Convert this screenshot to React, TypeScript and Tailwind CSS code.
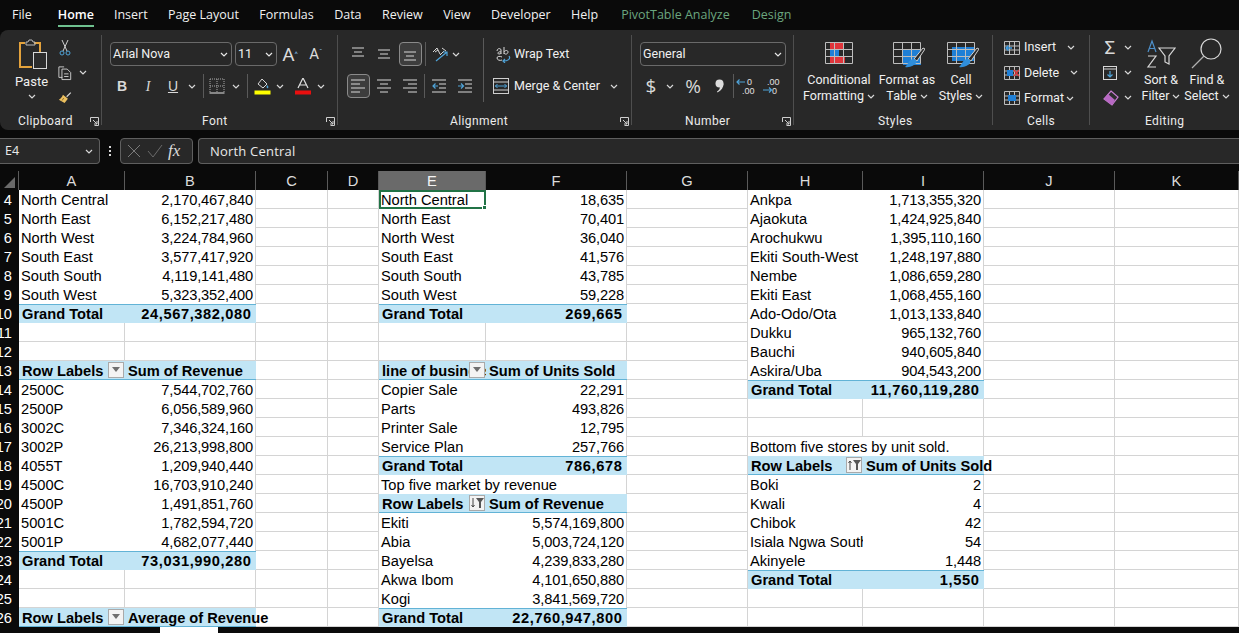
import type { ReactNode } from "react";

const tabs = ["Insert", "Page Layout", "Formulas", "Data", "Review", "View", "Developer", "Help"];
const colWidths = [106, 131, 72, 51, 107, 141, 121, 115, 121, 131, 124];
const letters = "ABCDEFGHIJK".split("");
const rowNums = Array.from({ length: 23 }, (_, i) => i + 4);

type Kind = "text" | "num" | "head" | "head2" | "total" | "total2";
type Btn = "drop" | "down" | "up";
interface Cell { t: string; k: Kind; btn?: Btn }

const cells: Record<string, Cell> = {};

function pivot(a: string, b: string, start: number, rows: [string, string][], total?: string) {
  rows.forEach((r, i) => {
    cells[a + (start + i)] = { t: r[0], k: "text" };
    cells[b + (start + i)] = { t: r[1], k: "num" };
  });
  if (total) {
    cells[a + (start + rows.length)] = { t: "Grand Total", k: "total" };
    cells[b + (start + rows.length)] = { t: total, k: "total2" };
  }
}

function head(a: string, b: string, row: number, left: string, right: string, btn: Btn) {
  cells[a + row] = { t: left, k: "head", btn };
  cells[b + row] = { t: right, k: "head2" };
}

pivot("A", "B", 4, [
  ["North Central", "2,170,467,840"], ["North East", "6,152,217,480"], ["North West", "3,224,784,960"],
  ["South East", "3,577,417,920"], ["South South", "4,119,141,480"], ["South West", "5,323,352,400"],
], "24,567,382,080");
head("A", "B", 13, "Row Labels", "Sum of Revenue", "drop");
pivot("A", "B", 14, [
  ["2500C", "7,544,702,760"], ["2500P", "6,056,589,960"], ["3002C", "7,346,324,160"],
  ["3002P", "26,213,998,800"], ["4055T", "1,209,940,440"], ["4500C", "16,703,910,240"],
  ["4500P", "1,491,851,760"], ["5001C", "1,782,594,720"], ["5001P", "4,682,077,440"],
], "73,031,990,280");
head("A", "B", 26, "Row Labels", "Average of Revenue", "drop");

pivot("E", "F", 4, [
  ["North Central", "18,635"], ["North East", "70,401"], ["North West", "36,040"],
  ["South East", "41,576"], ["South South", "43,785"], ["South West", "59,228"],
], "269,665");
head("E", "F", 13, "line of business", "Sum of Units Sold", "drop");
pivot("E", "F", 14, [
  ["Copier Sale", "22,291"], ["Parts", "493,826"], ["Printer Sale", "12,795"], ["Service Plan", "257,766"],
], "786,678");
pivot("E", "F", 19, [["Top five market by revenue", ""]]);
head("E", "F", 20, "Row Labels", "Sum of Revenue", "down");
pivot("E", "F", 21, [
  ["Ekiti", "5,574,169,800"], ["Abia", "5,003,724,120"], ["Bayelsa", "4,239,833,280"],
  ["Akwa Ibom", "4,101,650,880"], ["Kogi", "3,841,569,720"],
], "22,760,947,800");

pivot("H", "I", 4, [
  ["Ankpa", "1,713,355,320"], ["Ajaokuta", "1,424,925,840"], ["Arochukwu", "1,395,110,160"],
  ["Ekiti South-West", "1,248,197,880"], ["Nembe", "1,086,659,280"], ["Ekiti East", "1,068,455,160"],
  ["Ado-Odo/Ota", "1,013,133,840"], ["Dukku", "965,132,760"], ["Bauchi", "940,605,840"], ["Askira/Uba", "904,543,200"],
], "11,760,119,280");
pivot("H", "I", 17, [["Bottom five stores by unit sold.", ""]]);
head("H", "I", 18, "Row Labels", "Sum of Units Sold", "up");
pivot("H", "I", 19, [
  ["Boki", "2"], ["Kwali", "4"], ["Chibok", "42"], ["Isiala Ngwa South", "54"], ["Akinyele", "1,448"],
], "1,550");
// this one is cut off by its cell in the sheet, the two notes above run over
const clipped = new Set(["H22"]);

const kindClass: Record<Kind, string> = {
  text: "pl-[2px] leading-[20px]",
  num: "pr-[2px] text-right tracking-[-0.15px] leading-[20px] border-r border-[#d4d4d4]",
  head: "pl-[3px] font-bold leading-[20px] bg-[#c1e5f5] border-b border-[#62b3d6]",
  head2: "pl-[3px] font-bold leading-[20px] bg-[#c1e5f5] border-b border-[#62b3d6]",
  total: "pl-[3px] font-bold leading-[18px] bg-[#c1e5f5] border-t border-[#62b3d6]",
  total2: "pr-[4.5px] text-right font-bold tracking-[0.6px] leading-[18px] bg-[#c1e5f5] border-t border-[#62b3d6]",
};

function Chev({ className = "text-[#d8d8d8]" }: { className?: string }) {
  return (
    <svg width="8" height="5" viewBox="0 0 8 5" className={className}>
      <path d="M1 1l3 3 3-3" fill="none" stroke="currentColor" strokeWidth="1.2" />
    </svg>
  );
}

function Slot({ w, children }: { w: string; children?: ReactNode }) {
  return <div className={`${w} shrink-0 flex items-center justify-center`}>{children}</div>;
}

function Sep({ tall }: { tall?: boolean }) {
  return <div className={`w-px shrink-0 bg-[#5a5a5a] ${tall ? "h-[32px]" : "h-[24px]"}`} />;
}

function Launcher() {
  return (
    <svg width="9" height="9" viewBox="0 0 9 9" className="text-[#cfcfcf]">
      <path d="M.5 5V.5H8.5V8.5H4.5M3 3l4 4M4 7h3V4" fill="none" stroke="currentColor" />
    </svg>
  );
}

function Group({ w, label, pad, launcher, children }: { w: string; label: string; pad: string; launcher?: boolean; children: ReactNode }) {
  return (
    <section className={`${w} shrink-0 h-[90px] border-r border-[#4e4e4e] flex flex-col`}>
      <div className="h-[76px] shrink-0 flex flex-col">{children}</div>
      <div className={`${pad} mt-[3px] h-[14px] shrink-0 leading-[14px] text-[12px] tracking-[0.4px] text-[#ececec] flex items-center justify-between pr-[2px]`}>
        <span>{label}</span>
        {launcher && <Launcher />}
      </div>
    </section>
  );
}

function Select({ w, text }: { w: string; text: string }) {
  return (
    <div className={`${w} h-[24px] shrink-0 rounded-[4px] border border-[#6a6a6a] flex items-center justify-between pl-[2px] pr-[3px] text-[12.5px] text-[#f0f0f0]`}>
      <span>{text}</span>
      <Chev className="text-[#e8e8e8]" />
    </div>
  );
}

function AlignIcon({ mode }: { mode: "top" | "mid" | "bot" | "left" | "center" | "right" }) {
  const lines: Record<string, string> = {
    top: "M3 2h12M5 6h8M3 10h12",
    mid: "M3 4h12M5 8h8M3 12h12",
    bot: "M3 6h12M5 10h8M3 14h12",
    left: "M2 2h14M2 6h9M2 10h14M2 14h9",
    center: "M2 2h14M5 6h8M2 10h14M5 14h8",
    right: "M2 2h14M7 6h9M2 10h14M7 14h9",
  };
  return (
    <svg width="18" height="16" viewBox="0 0 18 16" className="text-[#d8d8d8]">
      <path d={lines[mode]} fill="none" stroke="currentColor" />
    </svg>
  );
}

function Selected({ children }: { children: ReactNode }) {
  return (
    <div className="w-[23px] h-[24px] rounded-[4px] border border-[#8a8a8a] bg-[#3d3d3d] flex items-center justify-center">
      {children}
    </div>
  );
}

function IndentIcon({ right }: { right?: boolean }) {
  return (
    <svg width="16" height="14" viewBox="0 0 16 14">
      <path d="M1 1h14M8 5h7M8 9h7M1 13h14" stroke="#d8d8d8" fill="none" />
      <path d={right ? "M1 7h5M4 4.5L6.5 7 4 9.5" : "M7 7H2M4.5 4.5L2 7l2.5 2.5"} stroke="#4fa3d8" strokeWidth="1.2" fill="none" />
    </svg>
  );
}

function PasteIcon() {
  return (
    <svg width="32" height="32" viewBox="0 0 32 32" fill="none">
      <path d="M9 5H4v24h12" stroke="#e3a23c" strokeWidth="2" />
      <path d="M18 5h6v9" stroke="#e3a23c" strokeWidth="2" />
      <path d="M10 7V4h2l1-2h3l1 2h2v3z" stroke="#b9b9b9" />
      <rect x="17.5" y="14.5" width="13" height="16" stroke="#d8d8d8" fill="#2c2c2c" />
    </svg>
  );
}

function CutIcon() {
  return (
    <svg width="12" height="17" viewBox="0 0 12 17" fill="none">
      <path d="M3 1l5 11M9 1L4 12" stroke="#cfcfcf" />
      <circle cx="3" cy="14" r="2" stroke="#4fa3d8" />
      <circle cx="9" cy="14" r="2" stroke="#4fa3d8" />
    </svg>
  );
}

function CopyIcon() {
  return (
    <svg width="16" height="16" viewBox="0 0 16 16" fill="none" stroke="#d8d8d8">
      <path d="M5 13H1V1h6" />
      <path d="M4.5 3.5h6l4 4v8h-10z" />
      <path d="M7 9h5M7 12h5" />
    </svg>
  );
}

function BrushIcon() {
  return (
    <svg width="17" height="16" viewBox="0 0 17 16" fill="none">
      <path d="M10 6l5-5 1 1-5 5z" fill="#d8d8d8" />
      <path d="M6 4l6 5-4 5-7-4c2-1 4-3 5-6z" fill="#ecc05f" />
      <path d="M5 11l2-3" stroke="#7a5c1e" />
    </svg>
  );
}

function BorderIcon() {
  return (
    <svg width="16" height="16" viewBox="0 0 16 16" fill="none">
      <path d="M1 1h14M1 8h14M8 1v14M1 1v14M15 1v14" stroke="#a8a8a8" strokeDasharray="1 1" />
      <path d="M.5 15h15" stroke="#e4e4e4" />
    </svg>
  );
}

function FillIcon() {
  return (
    <svg width="17" height="17" viewBox="0 0 17 17" fill="none">
      <path d="M8 1l5 5-4 4-5-4z" stroke="#d8d8d8" />
      <path d="M13 7c1 1 2 2 1 3s-2-1-1-3z" fill="#4fa3d8" />
      <rect x="0.5" y="12.5" width="16" height="4" fill="#ffff00" />
    </svg>
  );
}

function FontColorIcon() {
  return (
    <svg width="16" height="17" viewBox="0 0 16 17" fill="none">
      <path d="M3 10L8 0l5 10M5 7h6" stroke="#e0e0e0" strokeWidth="1.2" />
      <rect x="0" y="12.5" width="16" height="4" fill="#ea0f0f" />
    </svg>
  );
}

function OrientIcon() {
  return (
    <svg width="17" height="17" viewBox="0 0 17 17" fill="none">
      <path d="M1 6l4-4 3 6M3 6l3-2M8 9l4-4M10 2l4 3" stroke="#d8d8d8" />
      <path d="M4 15L15 6M11 6h4v4" stroke="#4fa3d8" strokeWidth="1.2" />
    </svg>
  );
}

function WrapIcon() {
  return (
    <svg width="15" height="17" viewBox="0 0 15 17" fill="none">
      <path d="M1 5c0-3 4-3 4-1v4M5 6C2 5 1 8 3 8s2-1 2-1M8 1v7M8 6c1-2 4-2 4 0s-3 3-4 1" stroke="#d8d8d8" />
      <path d="M6 14c-2 1-5 0-5-2s3-2 5-1" stroke="#d8d8d8" />
      <path d="M13 10c2 3-1 5-6 5M9 13l-2 2 2 2" stroke="#4fa3d8" strokeWidth="1.2" />
    </svg>
  );
}

function MergeIcon() {
  return (
    <svg width="16" height="16" viewBox="0 0 16 16" fill="none">
      <rect x="0.5" y="0.5" width="15" height="15" stroke="#cfcfcf" />
      <path d="M1 4h14M1 12h14" stroke="#cfcfcf" />
      <path d="M2 8h12M4.5 6L2.5 8l2 2M11.5 6l2 2-2 2" stroke="#4fa3d8" />
    </svg>
  );
}

function DecimalIcon({ more }: { more?: boolean }) {
  return (
    <svg width="20" height="18" viewBox="0 0 20 18" fill="none">
      <text x={more ? 6 : 11} y="8" fontSize="9" fill="#e0e0e0" fontFamily="Liberation Sans">{more ? ".00" : "0"}</text>
      <text x={more ? 11 : 6} y="17" fontSize="9" fill="#e0e0e0" fontFamily="Liberation Sans">{more ? "0" : ".00"}</text>
      <path d={more ? "M2 13h8M8 10.5l2.5 2.5L8 15.5" : "M9 5H1M3.5 2.5L1 5l2.5 2.5"} stroke="#4fa3d8" strokeWidth="1.2" />
    </svg>
  );
}

function CommaIcon() {
  return (
    <svg width="9" height="14" viewBox="0 0 9 14">
      <circle cx="4.5" cy="4.5" r="4" fill="#dcdcdc" />
      <path d="M8.5 4.5c0 4-2 7-6 9l-.5-1c2-1 3-3 3-5z" fill="#dcdcdc" />
    </svg>
  );
}

function GridPic({ kind }: { kind: "cond" | "table" | "style" }) {
  return (
    <svg width="36" height="29" viewBox="-4 0 36 29" fill="none">
      {kind === "cond" && (
        <>
          <rect x="5" y="1" width="13" height="7" fill="#e0353b" />
          <rect x="5" y="8" width="9" height="7" fill="#1f7fd6" />
          <rect x="5" y="15" width="15" height="7" fill="#e0353b" />
        </>
      )}
      {kind === "table" && <rect x="10" y="8" width="18" height="15" fill="#1f7fd6" />}
      {kind === "style" && <rect x="5" y="5" width="22" height="14" fill="#1f7fd6" />}
      <path d="M.5.5h27v21H.5zM.5 7.5h27M.5 14.5h27M9.5.5v21M18.5.5v21" stroke="#bdbdbd" />
      {kind !== "cond" && (
        <>
          <path d="M21 17L30 6l2 1-8 12z" fill="#2b2b2b" stroke="#cfcfcf" />
          <path d="M20 17c3 0 4 2 3 4s-6 5-11 4c3-2 3-7 8-8z" fill="#2f8edb" />
        </>
      )}
    </svg>
  );
}

function CellIcon({ kind }: { kind: "ins" | "del" | "fmt" }) {
  return (
    <svg width="16" height="16" viewBox="0 0 16 16" fill="none">
      <path d="M.5 1.5h15v13H.5zM.5 6h15M.5 10h15M5.5 1.5v13M10.5 1.5v13" stroke="#bdbdbd" />
      {kind === "ins" && <path d="M8 8H2M4.5 5.5L2 8l2.5 2.5" stroke="#3d9be0" strokeWidth="1.3" />}
      {kind === "del" && (
        <>
          <rect x="3" y="5" width="6" height="6" fill="#1f7fd6" />
          <path d="M10 5l5 6M15 5l-5 6" stroke="#e0353b" strokeWidth="1.3" />
        </>
      )}
      {kind === "fmt" && <rect x="4" y="5" width="8" height="6" fill="#1f7fd6" />}
    </svg>
  );
}

function CellBtn({ label, kind, gap }: { label: string; kind: "ins" | "del" | "fmt"; gap: string }) {
  return (
    <div className="h-[25.5px] flex items-center pl-[11px]">
      <CellIcon kind={kind} />
      <span className="ml-[4px] text-[12.5px] text-[#f0f0f0]">{label}</span>
      <span className={`${gap} flex`}><Chev /></span>
    </div>
  );
}

function SheetButton({ btn }: { btn: Btn }) {
  return (
    <span className="absolute right-[1.5px] top-[1px] w-[16px] h-[16px] bg-[#f3f3f3] border border-[#a9a9a9] flex items-center justify-center">
      {btn === "drop" ? (
        <svg width="10" height="6" viewBox="0 0 10 6"><path d="M1 0h8L5 5z" fill="#6f6f6f" /></svg>
      ) : (
        <svg width="14" height="12" viewBox="0 0 14 12" fill="none">
          <path d={btn === "down" ? "M3 1v9M1.5 8L3 10l1.5-2" : "M3 11V2M1.5 4L3 2l1.5 2"} stroke="#444" />
          <path d="M6 1h8L11 5v6h-2V5z" fill="#555" />
        </svg>
      )}
    </span>
  );
}

function SheetCell({ col, row }: { col: string; row: number }) {
  const id = col + row;
  const c = cells[id];
  if (!c) return <div className="h-[19px] border-r border-b border-[#d4d4d4]" />;
  return (
    <div className={`relative h-[19px] whitespace-nowrap ${kindClass[c.k]} ${c.k === "head" || clipped.has(id) ? "overflow-hidden" : ""}`}>
      {c.t}
      {c.btn && <SheetButton btn={c.btn} />}
      {id === "E4" && (
        <span className="absolute inset-0 z-10 border-2 border-[#217346]">
          <span className="absolute -right-[3px] -bottom-[3px] w-[5px] h-[5px] bg-[#217346] border border-white" />
        </span>
      )}
    </div>
  );
}

export default function App() {
  return (
    <div className="w-[1239px] h-screen overflow-hidden flex flex-col bg-[#0a0a0a] font-['Open_Sans',sans-serif] text-[#f0f0f0]">
      {/* tabs */}
      <nav className="h-[30px] pt-[1px] shrink-0 flex items-center pl-[12px] text-[12.5px]">
        <span>File</span>
        <span className="relative ml-[26px] mr-[20px] font-semibold text-white">
          Home
          <span className="absolute left-0 right-0 top-[19px] h-[2px] bg-[#6fc18f]" />
        </span>
        <div className="flex gap-[20.4px]">
          {tabs.map((t) => <span key={t}>{t}</span>)}
        </div>
        <span className="ml-[23px] text-[#6aa67f]">PivotTable Analyze</span>
        <span className="ml-[22px] text-[#6aa67f]">Design</span>
      </nav>

      {/* ribbon */}
      <div className="h-[100px] shrink-0 bg-[#282828] rounded-l-[8px] flex py-[5px] font-['Roboto',sans-serif] text-[12.5px]">
        <Group w="w-[102px]" label="Clipboard" pad="pl-[18px]" launcher>
          <div className="flex h-full">
            <div className="w-[56px] ml-[2px] pl-[3px] pt-[3px] flex flex-col items-center">
              <PasteIcon />
              <span className="mt-[4px] leading-[16px] text-[13px]">Paste</span>
              <span className="mt-[4px] flex"><Chev /></span>
            </div>
            <div className="flex flex-col">
              <div className="h-[25px] flex items-center"><Slot w="w-[14px]"><CutIcon /></Slot></div>
              <div className="h-[25px] flex items-center"><Slot w="w-[14px]"><CopyIcon /></Slot><Slot w="w-[22px]"><Chev /></Slot></div>
              <div className="h-[25px] flex items-center"><Slot w="w-[14px]"><BrushIcon /></Slot></div>
            </div>
          </div>
        </Group>

        <Group w="w-[236px]" label="Font" pad="pl-[100px]" launcher>
          <div className="pl-[8px] pt-[7px] flex flex-col gap-[8px]">
            <div className="h-[24px] flex items-center">
              <Select w="w-[122px]" text="Arial Nova" />
              <div className="w-[3px]" />
              <Select w="w-[42px]" text="11" />
              <Slot w="w-[26px]"><span className="text-[19px] leading-none text-[#dcdcdc]">A<sup className="text-[8px] text-[#7fb6e0]">^</sup></span></Slot>
              <Slot w="w-[26px]"><span className="text-[15px] leading-none text-[#dcdcdc]">A<sup className="text-[8px] text-[#7fb6e0]">ˇ</sup></span></Slot>
            </div>
            <div className="h-[24px] flex items-center text-[#d8d8d8]">
              <Slot w="w-[24px]"><span className="font-['Liberation_Sans'] font-bold text-[14px]">B</span></Slot>
              <Slot w="w-[28px]"><span className="font-['Liberation_Serif'] italic text-[14px]">I</span></Slot>
              <Slot w="w-[22px]"><span className="font-['Liberation_Sans'] underline text-[14px]">U</span></Slot>
              <Slot w="w-[16px]"><Chev /></Slot>
              <Slot w="w-[6px]"><Sep /></Slot>
              <Slot w="w-[22px]"><BorderIcon /></Slot>
              <Slot w="w-[16px]"><Chev /></Slot>
              <Slot w="w-[6px]"><Sep /></Slot>
              <Slot w="w-[24px]"><FillIcon /></Slot>
              <Slot w="w-[12px]"><Chev /></Slot>
              <div className="w-[6px]" />
              <Slot w="w-[22px]"><FontColorIcon /></Slot>
              <Slot w="w-[14px]"><Chev /></Slot>
            </div>
          </div>
        </Group>

        <Group w="w-[294px]" label="Alignment" pad="pl-[112px]" launcher>
          <div className="pl-[7px] pt-[7px] flex flex-col gap-[8px]">
            <div className="h-[24px] flex items-center">
              <Slot w="w-[26px]"><AlignIcon mode="top" /></Slot>
              <Slot w="w-[26px]"><AlignIcon mode="mid" /></Slot>
              <Slot w="w-[26px]"><Selected><AlignIcon mode="bot" /></Selected></Slot>
              <Slot w="w-[5px]"><Sep /></Slot>
              <Slot w="w-[24px]"><OrientIcon /></Slot>
              <Slot w="w-[8px]"><Chev /></Slot>
              <div className="w-[22px]" />
              <Slot w="w-[2px]"><Sep tall /></Slot>
              <div className="w-[12px]" />
              <Slot w="w-[15px]"><WrapIcon /></Slot>
              <span className="ml-[3px]">Wrap Text</span>
            </div>
            <div className="h-[24px] flex items-center">
              <Slot w="w-[26px]"><Selected><AlignIcon mode="left" /></Selected></Slot>
              <Slot w="w-[26px]"><AlignIcon mode="center" /></Slot>
              <Slot w="w-[26px]"><AlignIcon mode="right" /></Slot>
              <Slot w="w-[3px]"><Sep /></Slot>
              <Slot w="w-[26px]"><IndentIcon /></Slot>
              <Slot w="w-[26px]"><IndentIcon right /></Slot>
              <div className="w-[4px]" />
              <Slot w="w-[2px]"><Sep tall /></Slot>
              <div className="w-[9px]" />
              <Slot w="w-[16px]"><MergeIcon /></Slot>
              <span className="ml-[5px] w-[85px] whitespace-nowrap">Merge &amp; Center</span>
              <Slot w="w-[30px]"><Chev /></Slot>
            </div>
          </div>
        </Group>

        <Group w="w-[162px]" label="Number" pad="pl-[53px]" launcher>
          <div className="pl-[8px] pt-[7px] flex flex-col gap-[8px]">
            <div className="h-[24px] flex items-center">
              <Select w="w-[146px]" text="General" />
            </div>
            <div className="h-[24px] flex items-center text-[#d8d8d8]">
              <Slot w="w-[22px]"><span className="font-['Open_Sans'] text-[19px] leading-none">$</span></Slot>
              <Slot w="w-[16px]"><Chev /></Slot>
              <Slot w="w-[30px]"><span className="font-['Open_Sans'] text-[19px] leading-none">%</span></Slot>
              <Slot w="w-[22px]"><CommaIcon /></Slot>
              <div className="w-[2px]" />
              <Slot w="w-[2px]"><Sep /></Slot>
              <Slot w="w-[24px]"><DecimalIcon /></Slot>
              <Slot w="w-[26px]"><DecimalIcon more /></Slot>
            </div>
          </div>
        </Group>

        <Group w="w-[199px]" label="Styles" pad="pl-[84px] pr-[2px]">
          <div className="flex pt-[7px] leading-[16px] whitespace-nowrap">
            <div className="w-[90px] flex flex-col items-center">
              <GridPic kind="cond" />
              <span className="mt-[1px]">Conditional</span>
              <span className="flex items-center gap-[3px]">Formatting <Chev /></span>
            </div>
            <div className="w-[46px] flex flex-col items-center">
              <GridPic kind="table" />
              <span className="mt-[1px]">Format as</span>
              <span className="flex items-center gap-[3px]">Table <Chev /></span>
            </div>
            <div className="w-[62px] flex flex-col items-center">
              <GridPic kind="style" />
              <span className="mt-[1px]">Cell</span>
              <span className="flex items-center gap-[3px]">Styles <Chev /></span>
            </div>
          </div>
        </Group>

        <Group w="w-[97px]" label="Cells" pad="pl-[34px]">
          <CellBtn label="Insert" kind="ins" gap="ml-[11px]" />
          <CellBtn label="Delete" kind="del" gap="ml-[11px]" />
          <CellBtn label="Format" kind="fmt" gap="ml-[2px]" />
        </Group>

        <section className="w-[149px] shrink-0 h-[90px] flex flex-col">
          <div className="h-[76px] shrink-0 flex">
            <div className="w-[47px] flex flex-col pl-[11px]">
              <div className="h-[25px] flex items-center">
                <span className="w-[18px] text-center text-[19px] leading-none text-[#d8d8d8]">Σ</span>
                <span className="ml-[5px] flex"><Chev /></span>
              </div>
              <div className="h-[25px] flex items-center">
                <svg width="18" height="16" viewBox="0 0 18 16" fill="none">
                  <rect x="2.5" y="1.5" width="13" height="13" stroke="#d8d8d8" />
                  <path d="M2 4h14" stroke="#d8d8d8" />
                  <path d="M9 6v6M6.5 9.5L9 12l2.5-2.5" stroke="#4fa3d8" strokeWidth="1.2" />
                </svg>
                <span className="ml-[5px] flex"><Chev /></span>
              </div>
              <div className="h-[25px] flex items-center">
                <svg width="18" height="16" viewBox="0 0 18 16" fill="none">
                  <path d="M10 1l7 6-6 8-8-6z" fill="#2d2d2d" stroke="#c77dd0" strokeWidth="1.2" />
                  <path d="M3 9l4-5 7 6-3 5z" fill="#b868c4" />
                </svg>
                <span className="ml-[5px] flex"><Chev /></span>
              </div>
            </div>
            <div className="w-[48px] flex flex-col items-center pt-[4px] leading-[16px] whitespace-nowrap">
              <svg width="30" height="30" viewBox="0 0 30 30" fill="none">
                <path d="M2 13L6 2l4 11M3.5 9.5h5" stroke="#4d8fc9" strokeWidth="1.2" />
                <path d="M2 17h8l-8 11h8" stroke="#d8d8d8" strokeWidth="1.2" />
                <path d="M13 9h16l-6 8v8l-4-2v-6z" stroke="#d8d8d8" strokeWidth="1.2" />
              </svg>
              <span className="mt-[3px]">Sort &amp;</span>
              <span className="flex items-center gap-[3px]">Filter <Chev /></span>
            </div>
            <div className="w-[44px] flex flex-col items-center pt-[2px] leading-[16px] whitespace-nowrap">
              <svg width="32" height="32" viewBox="0 0 32 32" fill="none">
                <circle cx="20" cy="12" r="10" stroke="#d8d8d8" strokeWidth="1.2" />
                <path d="M13 19L1 31" stroke="#b0b0b0" strokeWidth="1.2" />
              </svg>
              <span className="mt-[3px]">Find &amp;</span>
              <span className="flex items-center gap-[3px]">Select <Chev /></span>
            </div>
          </div>
          <div className="pl-[55px] mt-[3px] h-[14px] shrink-0 leading-[14px] text-[12px] tracking-[0.4px] text-[#ececec]">Editing</div>
        </section>
      </div>

      {/* formula bar */}
      <div className="h-[26px] mt-[8px] shrink-0 flex items-stretch text-[#e8e8e8]">
        <div className="w-[100px] rounded-r-[4px] border border-l-0 border-[#5f5f5f] bg-[#282828] flex items-center justify-between pt-[1px] pl-[5px] pr-[6px] text-[12.5px]">
          <span>E4</span>
          <Chev />
        </div>
        <div className="w-[20px] flex flex-col items-center justify-center gap-[2px]">
          <span className="w-[2px] h-[2px] bg-[#d8d8d8]" />
          <span className="w-[2px] h-[2px] bg-[#d8d8d8]" />
          <span className="w-[2px] h-[2px] bg-[#d8d8d8]" />
        </div>
        <div className="w-[73px] rounded-[4px] border border-[#5f5f5f] bg-[#282828] flex items-center pl-[6px]">
          <svg width="14" height="14" viewBox="0 0 14 14" fill="none"><path d="M1 1l12 12M13 1L1 13" stroke="#7a7a7a" /></svg>
          <svg width="16" height="14" viewBox="0 0 16 14" fill="none" className="ml-[6px]"><path d="M1 7l5 6L15 1" stroke="#6a6a6a" /></svg>
          <span className="ml-[5px] font-['Liberation_Serif'] italic text-[17px] text-[#dcdcdc]">fx</span>
        </div>
        <div className="flex-1 ml-[5px] rounded-l-[4px] border border-r-0 border-[#5f5f5f] bg-[#282828] flex items-center pt-[1px] pl-[11px] text-[13px] tracking-[0.2px]">
          North Central
        </div>
      </div>

      {/* column letters */}
      <div className="mt-[7px] h-[19px] shrink-0 flex font-['Liberation_Sans'] text-[14.67px] leading-[20px] text-[#dcdcdc]">
        <div className="w-[19px] flex items-end justify-end pr-[3px] pb-[2px] border-r border-[#5a5a5a]">
          <svg width="11" height="11" viewBox="0 0 11 11"><path d="M11 0v11H0z" fill="#6a6a6a" /></svg>
        </div>
        {letters.map((l, i) => (
          <div
            key={l}
            style={{ width: colWidths[i] }}
            className={`text-center border-r border-[#5a5a5a] ${l === "E" ? "bg-[#6a6a6a] text-[#f4f4f4]" : ""}`}
          >
            {l}
          </div>
        ))}
      </div>

      {/* sheet */}
      <div className="flex shrink-0 font-['Liberation_Sans'] text-[14.67px] text-black">
        <div className="w-[19px] shrink-0 text-white">
          {rowNums.map((n) => (
            <div key={n} className="h-[19px] leading-[20px] overflow-hidden flex justify-end pr-[7px]">
              {n}
            </div>
          ))}
        </div>
        <div className="flex-1 bg-white grid grid-cols-[106px_131px_72px_51px_107px_141px_121px_115px_121px_131px_124px]">
          {rowNums.map((r) => letters.map((c) => <SheetCell key={c + r} col={c} row={r} />))}
        </div>
      </div>

      {/* bottom edge, the window below peeks through */}
      <div className="flex-1 flex">
        <div className="w-[160px] bg-[#0a0a0a] rounded-tr-[3px]" />
        <div className="w-[58px] bg-white" />
        <div className="flex-1 bg-[#0a0a0a] rounded-tl-[3px]" />
      </div>
    </div>
  );
}
